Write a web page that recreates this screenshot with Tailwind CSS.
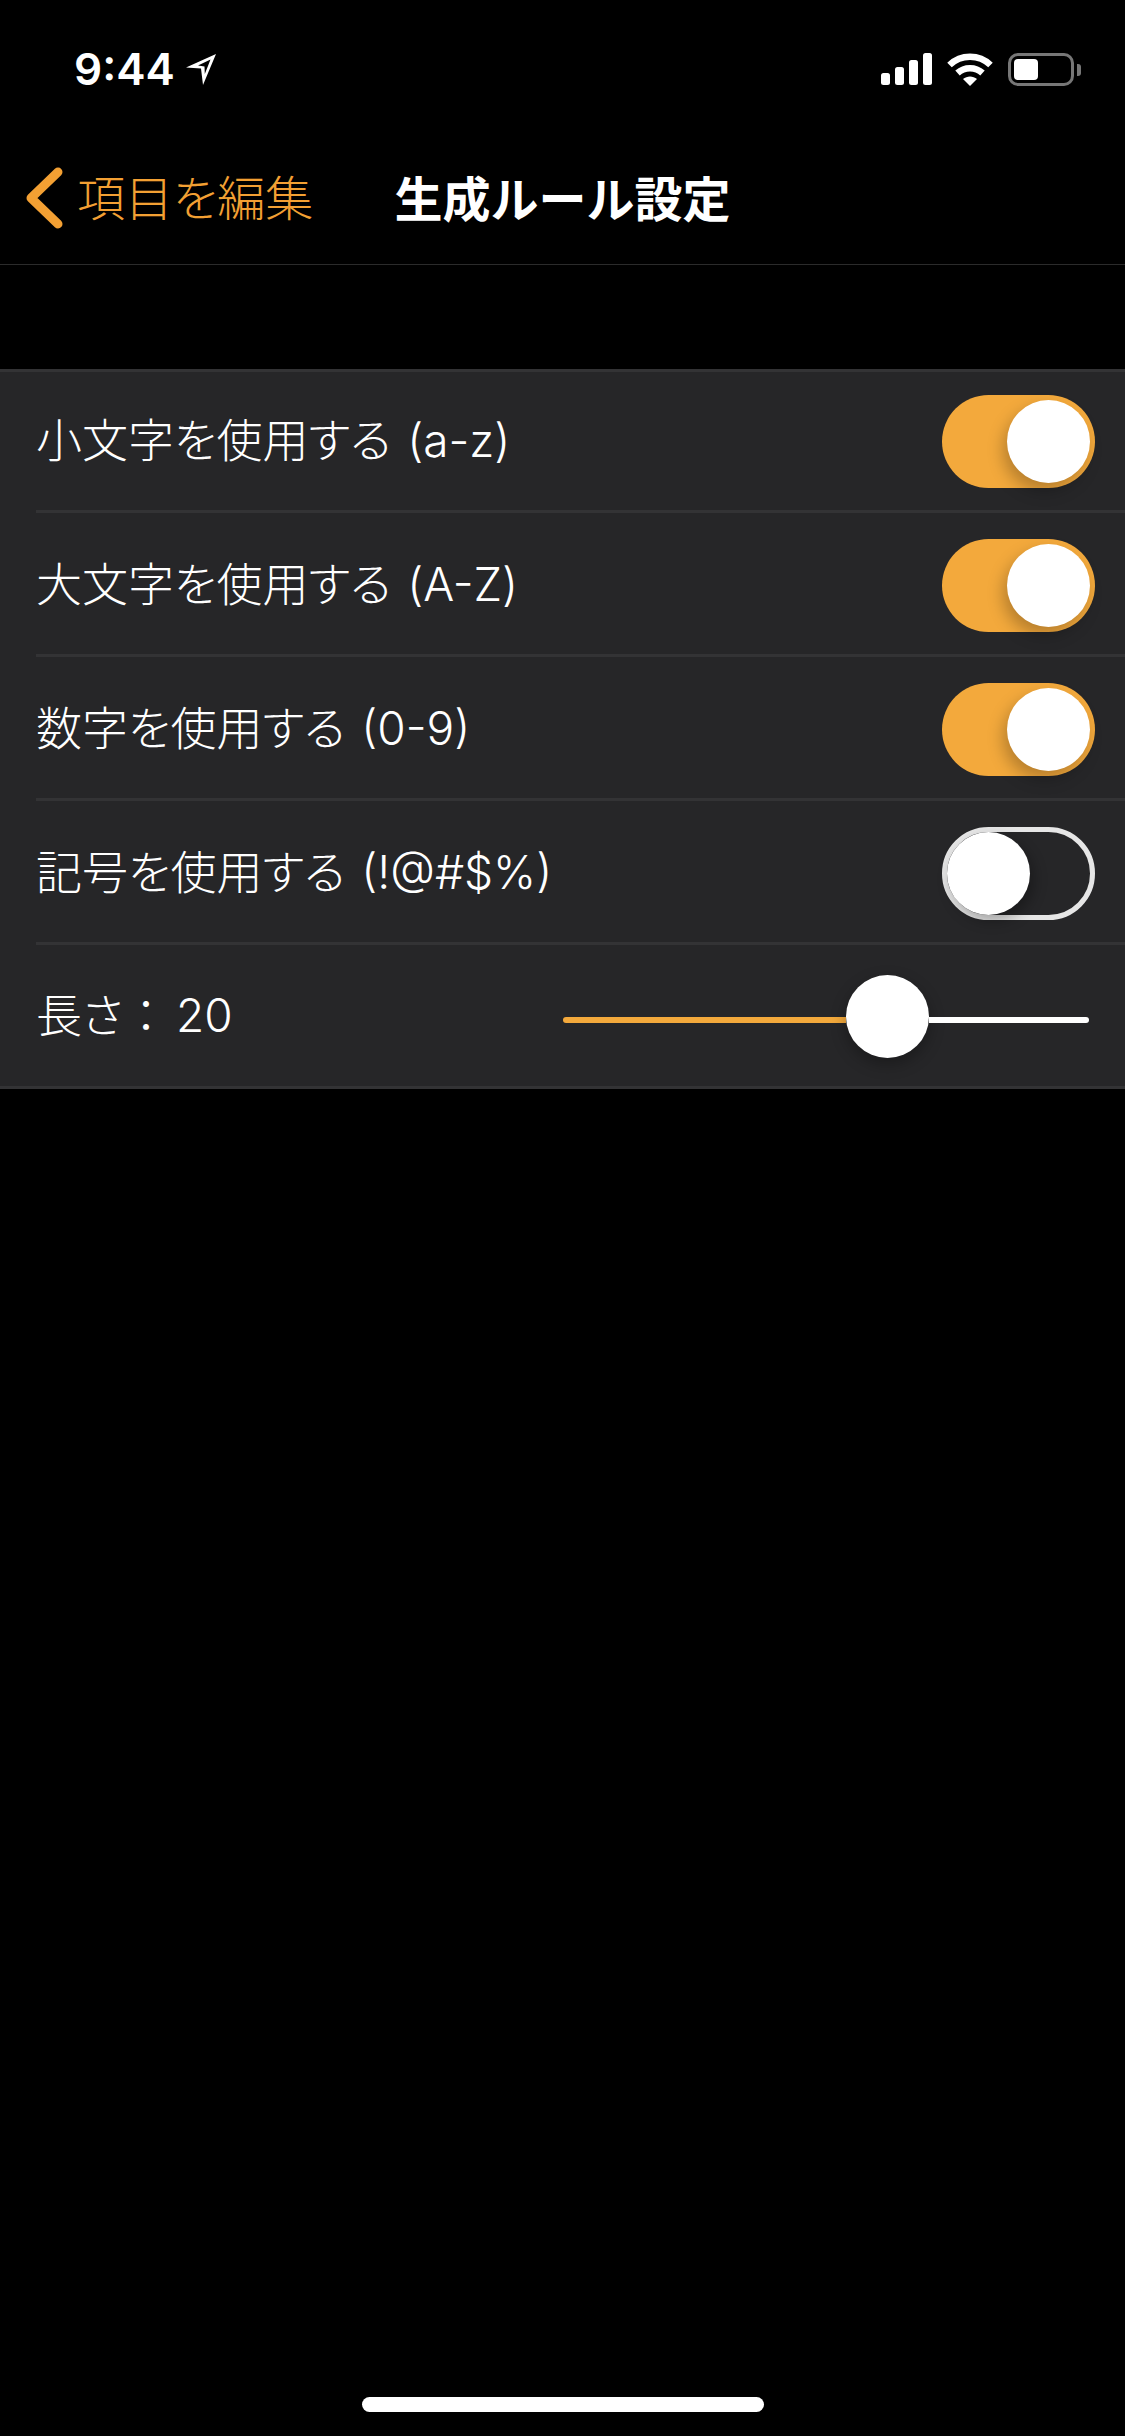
<!DOCTYPE html>
<html lang="ja">
<head>
  <meta charset="UTF-8">
  <title>生成ルール設定</title>
  <script src="https://cdn.jsdelivr.net/npm/@tailwindcss/browser@4"></script>
</head>
<body class="bg-black">
  <div class="flex flex-col w-[1125px] h-[2436px] bg-black text-white font-['Inter','Noto_Sans_CJK_JP',sans-serif] [font-feature-settings:'palt']">
    <!-- status bar -->
    <div class="flex justify-between items-start h-[132px] pt-[52px] pl-[74px] pr-[44px]">
      <div class="flex items-center h-[35px]">
        <span class="font-['Inter',sans-serif] font-semibold text-[44px] leading-[35px]">9:44</span>
        <svg class="ml-[11px]" width="31" height="33" viewBox="0 0 31 33"><path d="M30 1 L0 14.5 L15 15.5 L17 32 Z M24.5 6.5 L12 12.5 L18.5 13.5 L18.8 21 Z" fill="#fff" fill-rule="evenodd"/></svg>
      </div>
      <div class="flex items-center h-[35px]">
        <svg width="51" height="33" viewBox="0 0 51 33" fill="#fff">
          <rect x="0" y="20" width="9" height="12" rx="2.5"/>
          <rect x="14" y="14" width="9" height="18" rx="2.5"/>
          <rect x="28" y="7" width="9" height="25" rx="2.5"/>
          <rect x="42" y="0" width="9" height="32" rx="2.5"/>
        </svg>
        <svg class="ml-[15px]" width="46" height="33" viewBox="0 0 46 33" fill="none" stroke="#fff">
          <path d="M2.5 12 C14 1 32 1 43.5 12" stroke-width="6.5"/>
          <path d="M10.5 20 C17.5 13.5 28.5 13.5 35.5 20" stroke-width="6.5"/>
          <path d="M16 26 C20 22.5 26 22.5 30 26 L23 33 Z" fill="#fff" stroke="none"/>
        </svg>
        <div class="ml-[15px] flex items-center">
          <div class="w-[66px] h-[33px] rounded-[10px] border-[3px] border-[#777777] p-[3px]">
            <div class="w-[24px] h-full rounded-[4px] bg-white"></div>
          </div>
          <div class="ml-[3px] w-[4px] h-[12px] rounded-r-[3px] bg-[#777777]"></div>
        </div>
      </div>
    </div>

    <!-- nav bar -->
    <div class="grid grid-cols-[1fr_auto_1fr] items-center h-[133px] border-b border-[#2b2b2b]">
      <div class="flex items-center pl-[26px]">
        <svg width="40" height="62" viewBox="0 0 40 62" fill="none" stroke="#f3a033" stroke-width="9" stroke-linecap="round" stroke-linejoin="round"><path d="M32 5 L5 31 L32 57"/></svg>
        <span class="ml-[11px] pt-[2px] text-[48px] leading-[60px] font-light text-[#f3a033]">項目を編集</span>
      </div>
      <div class="pt-[3px] text-[48px] leading-[60px] font-bold [font-feature-settings:normal]">生成ルール設定</div>
      <div></div>
    </div>

    <!-- settings group -->
    <div class="mt-[104px] bg-[#262628] border-y-[3px] border-[#333335]">
      <div class="flex items-center justify-between h-[138px] pt-[1px] pl-[36px] pr-[30px]">
        <span class="pb-[2px] text-[46px] font-light [word-spacing:3px]">小文字を使用する (a-z)</span>
        <div class="flex justify-end items-center w-[153px] h-[93px] p-[5px] rounded-full bg-[#f3a93c]">
          <div class="w-[83px] h-[83px] rounded-full bg-white shadow-[-4px_8px_16px_rgba(0,0,0,0.25)]"></div>
        </div>
      </div>
      <div class="ml-[36px] border-t-[3px] border-[#333335]"></div>
      <div class="flex items-center justify-between h-[141px] pt-[4px] pl-[36px] pr-[30px]">
        <span class="pb-[2px] text-[46px] font-light [word-spacing:3px]">大文字を使用する (A-Z)</span>
        <div class="flex justify-end items-center w-[153px] h-[93px] p-[5px] rounded-full bg-[#f3a93c]">
          <div class="w-[83px] h-[83px] rounded-full bg-white shadow-[-4px_8px_16px_rgba(0,0,0,0.25)]"></div>
        </div>
      </div>
      <div class="ml-[36px] border-t-[3px] border-[#333335]"></div>
      <div class="flex items-center justify-between h-[141px] pt-[4px] pl-[36px] pr-[30px]">
        <span class="pb-[2px] text-[46px] font-light [word-spacing:3px]">数字を使用する (0-9)</span>
        <div class="flex justify-end items-center w-[153px] h-[93px] p-[5px] rounded-full bg-[#f3a93c]">
          <div class="w-[83px] h-[83px] rounded-full bg-white shadow-[-4px_8px_16px_rgba(0,0,0,0.25)]"></div>
        </div>
      </div>
      <div class="ml-[36px] border-t-[3px] border-[#333335]"></div>
      <div class="flex items-center justify-between h-[141px] pt-[4px] pl-[36px] pr-[30px]">
        <span class="pb-[2px] text-[46px] font-light [word-spacing:3px]">記号を使用する (!@#$%)</span>
        <div class="flex justify-start items-center w-[153px] h-[93px] rounded-full border-[5px] border-[#e6e6e6]">
          <div class="w-[83px] h-[83px] rounded-full bg-white shadow-[4px_6px_14px_rgba(0,0,0,0.3)]"></div>
        </div>
      </div>
      <div class="ml-[36px] border-t-[3px] border-[#333335]"></div>
      <div class="flex items-center justify-between h-[141px] pt-[2px] pl-[36px] pr-[36px]">
        <span class="pb-[2px] text-[46px] font-light [word-spacing:-6px]">長さ<span class="[font-feature-settings:normal]">：</span> 20</span>
        <div class="flex items-center w-[526px]">
          <div class="mt-[7px] w-[283px] h-[6px] rounded-l-full bg-[#f3a93c]"></div>
          <div class="w-[83px] h-[83px] rounded-full bg-white shadow-[0_6px_16px_rgba(0,0,0,0.3)]"></div>
          <div class="mt-[7px] w-[160px] h-[6px] rounded-r-full bg-white"></div>
        </div>
      </div>
    </div>

    <!-- home indicator -->
    <div class="mt-auto mb-[24px] mx-auto w-[402px] h-[15px] rounded-full bg-white"></div>
  </div>
</body>
</html>
